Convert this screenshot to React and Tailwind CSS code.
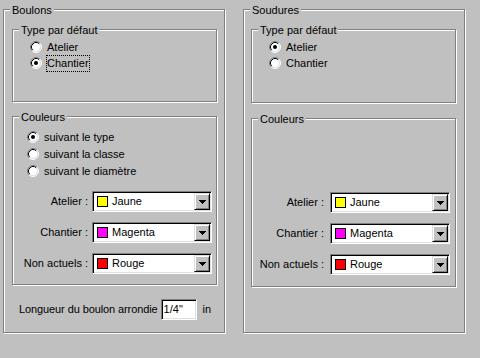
import React from "react";

// Windows-classic style option page: "Boulons" / "Soudures"

const Radio = ({ checked }) => (
  <svg width="12" height="12" viewBox="0 0 12 12" className="shrink-0">
    <circle cx="6" cy="6" r="5" fill="#fff" />
    <path d="M2.11 9.89 A5.5 5.5 0 0 1 9.89 2.11" fill="none" stroke="#808080" />
    <path d="M2.82 9.18 A4.5 4.5 0 0 1 9.18 2.82" fill="none" stroke="#000" />
    <path d="M9.89 2.11 A5.5 5.5 0 0 1 2.11 9.89" fill="none" stroke="#fff" />
    <path d="M9.18 2.82 A4.5 4.5 0 0 1 2.82 9.18" fill="none" stroke="#dfdfdf" />
    {checked && <circle cx="6" cy="6" r="2" fill="#000" />}
  </svg>
);

const RadioRow = ({ checked, label, focused }) => (
  <div className="flex items-center h-[12px]">
    <Radio checked={checked} />
    <span
      className={`ml-[4px] border py-px leading-[13px] ${
        focused ? "border-dotted border-black" : "border-transparent"
      }`}
    >
      {label}
    </span>
  </div>
);

const Group = ({ label, className, children }) => (
  <div
    className={`relative border border-[#808080] shadow-[inset_1px_1px_0_#fff,1px_1px_0_#fff] ${className}`}
  >
    <span className="absolute left-[6px] -top-[6px] px-[2px] bg-[#c0c0c0] leading-[13px] whitespace-nowrap">
      {label}
    </span>
    {children}
  </div>
);

const Combo = ({ swatch, value }) => (
  <div className="flex h-[21px] w-[120px] bg-white border border-t-[#808080] border-l-[#808080] border-b-white border-r-white p-px shadow-[inset_1px_1px_0_#000,inset_-1px_-1px_0_#dfdfdf]">
    <div className="flex flex-1 items-center">
      <span className={`ml-[3px] w-[11px] h-[11px] border border-black ${swatch}`} />
      <span className="ml-[4px]">{value}</span>
    </div>
    <div className="flex items-center justify-center w-[16px] h-full bg-[#c0c0c0] border border-t-[#dfdfdf] border-l-[#dfdfdf] border-b-black border-r-black shadow-[inset_1px_1px_0_#fff,inset_-1px_-1px_0_#808080]">
      <svg width="7" height="4" viewBox="0 0 7 4" shapeRendering="crispEdges">
        <path d="M0 0h7v1H0zM1 1h5v1H1zM2 2h3v1H2zM3 3h1v1H3z" fill="#000" />
      </svg>
    </div>
  </div>
);

const ComboRow = ({ label, labelW, gap, swatch, value }) => (
  <div className="flex items-center">
    <span className={`text-right whitespace-nowrap ${labelW}`}>{label}</span>
    <div className={gap}>
      <Combo swatch={swatch} value={value} />
    </div>
  </div>
);

const colors = [
  { label: "Atelier :", swatch: "bg-[#ffff00]", value: "Jaune" },
  { label: "Chantier :", swatch: "bg-[#ff00ff]", value: "Magenta" },
  { label: "Non actuels :", swatch: "bg-[#ff0000]", value: "Rouge" },
];

export default function App() {
  return (
    <div className="w-[480px] h-[358px] bg-[#c0c0c0] flex items-start pt-[9px] pl-[3px] font-['Liberation_Sans',Arial,sans-serif] text-[11px] leading-[13px] text-black overflow-hidden">
      {/* Boulons */}
      <Group label="Boulons" className="w-[222px] h-[324px] flex flex-col">
        <Group label="Type par défaut" className="ml-[8px] mt-[19px] w-[205px] h-[73px]">
          <div className="flex flex-col gap-[4px] pt-[11px] pl-[17px]">
            <RadioRow label="Atelier" />
            <RadioRow label="Chantier" checked focused />
          </div>
        </Group>
        <Group label="Couleurs" className="ml-[8px] mt-[14px] w-[205px] h-[169px]">
          <div className="flex flex-col gap-[5px] pt-[14px] pl-[14px]">
            <RadioRow label="suivant le type" checked />
            <RadioRow label="suivant la classe" />
            <RadioRow label="suivant le diamètre" />
          </div>
          <div className="flex flex-col gap-[10px] mt-[14px]">
            {colors.map((c) => (
              <ComboRow key={c.value} {...c} labelW="w-[75px]" gap="ml-[4px]" />
            ))}
          </div>
        </Group>
        <div className="flex items-center h-[21px] mt-[14px] pl-[15px]">
          <span className="whitespace-nowrap tracking-[-0.1px]">Longueur du boulon arrondie</span>
          <div className="ml-[3px] flex items-center w-[36px] h-[21px] bg-white border border-t-[#808080] border-l-[#808080] border-b-white border-r-white p-px shadow-[inset_1px_1px_0_#000,inset_-1px_-1px_0_#dfdfdf]">
            <span className="pl-[1px]">1/4"</span>
          </div>
          <span className="ml-[6px]">in</span>
        </div>
      </Group>

      {/* Soudures */}
      <Group label="Soudures" className="ml-[18px] w-[222px] h-[324px] flex flex-col">
        <Group label="Type par défaut" className="ml-[7px] mt-[19px] w-[205px] h-[74px]">
          <div className="flex flex-col gap-[4px] pt-[11px] pl-[17px]">
            <RadioRow label="Atelier" checked />
            <RadioRow label="Chantier" />
          </div>
        </Group>
        <Group label="Couleurs" className="ml-[7px] mt-[15px] w-[205px] h-[169px]">
          <div className="flex flex-col gap-[10px] pt-[73px]">
            {colors.map((c) => (
              <ComboRow key={c.value} {...c} labelW="w-[72px]" gap="ml-[6px]" />
            ))}
          </div>
        </Group>
      </Group>
    </div>
  );
}
